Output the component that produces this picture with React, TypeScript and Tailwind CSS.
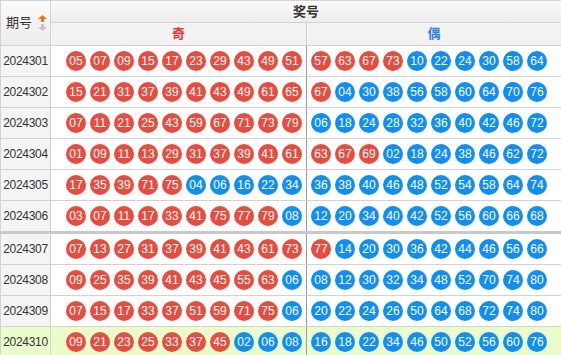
import React from 'react';

interface Draw {
  issue: string;
  odd: string[];
  even: string[];
  highlight?: boolean;
}

const draws: Draw[] = [
  { issue: '2024301', odd: ['05', '07', '09', '15', '17', '23', '29', '43', '49', '51'], even: ['57', '63', '67', '73', '10', '22', '24', '30', '58', '64'] },
  { issue: '2024302', odd: ['15', '21', '31', '37', '39', '41', '43', '49', '61', '65'], even: ['67', '04', '30', '38', '56', '58', '60', '64', '70', '76'] },
  { issue: '2024303', odd: ['07', '11', '21', '25', '43', '59', '67', '71', '73', '79'], even: ['06', '18', '24', '28', '32', '36', '40', '42', '46', '72'] },
  { issue: '2024304', odd: ['01', '09', '11', '13', '29', '31', '37', '39', '41', '61'], even: ['63', '67', '69', '02', '18', '24', '38', '46', '62', '72'] },
  { issue: '2024305', odd: ['17', '35', '39', '71', '75', '04', '06', '16', '22', '34'], even: ['36', '38', '40', '46', '48', '52', '54', '58', '64', '74'] },
  { issue: '2024306', odd: ['03', '07', '11', '17', '33', '41', '75', '77', '79', '08'], even: ['12', '20', '34', '40', '42', '52', '56', '60', '66', '68'] },
  { issue: '2024307', odd: ['07', '13', '27', '31', '37', '39', '41', '43', '61', '73'], even: ['77', '14', '20', '30', '36', '42', '44', '46', '56', '66'] },
  { issue: '2024308', odd: ['09', '25', '35', '39', '41', '43', '45', '55', '63', '06'], even: ['08', '12', '30', '32', '34', '48', '52', '70', '74', '80'] },
  { issue: '2024309', odd: ['07', '15', '17', '33', '37', '51', '59', '71', '75', '06'], even: ['20', '22', '24', '26', '50', '64', '68', '72', '74', '80'] },
  { issue: '2024310', odd: ['09', '21', '23', '25', '33', '37', '45', '02', '06', '08'], even: ['16', '18', '22', '34', '46', '50', '52', '56', '60', '76'], highlight: true },
];

const Ball: React.FC<{ num: string }> = ({ num }) => {
  const isOdd = parseInt(num, 10) % 2 === 1;
  return (
    <span
      className={`flex h-[20px] w-[20px] shrink-0 items-center justify-center rounded-full text-[12px] leading-none text-white ${
        isOdd ? 'bg-[#e84c3e]' : 'bg-[#108ef3]'
      }`}
    >
      {num}
    </span>
  );
};

const SortIcon = () => (
  <svg width="9" height="16" viewBox="0 0 9 16" className="ml-[6px]">
    <path d="M4.5 0 L9 4 L6 4 L6 7 L3 7 L3 4 L0 4 Z" fill="#f5700f" />
    <path d="M4.5 16 L9 12 L6 12 L6 9 L3 9 L3 12 L0 12 Z" fill="#c4c4c4" />
  </svg>
);

export default function App() {
  return (
    <div
      className="h-[355px] w-[561px] overflow-hidden bg-white text-[#333]"
      style={{ fontFamily: '"Liberation Sans", "Noto Sans CJK SC", sans-serif' }}
    >
      {/* header */}
      <div className="flex border-t border-[#d2d2d2]">
        <div className="flex h-[45px] w-[51px] shrink-0 items-center justify-center border-r border-b border-l border-[#d2d2d2] bg-gradient-to-b from-[#fbfbfb] to-[#ececec] pl-[2px] text-[13px]">
          期号
          <SortIcon />
        </div>
        <div className="flex flex-1 flex-col">
          <div className="flex h-[22px] items-center justify-center border-b border-[#d2d2d2] bg-gradient-to-b from-[#fbfbfb] to-[#ececec] text-[13px] font-bold text-[#333]">
            奖号
          </div>
          <div className="flex h-[23px] border-b border-[#d2d2d2] bg-[#f2f2f2] text-[13px] font-bold">
            <div className="flex w-[256px] items-center justify-center border-r border-[#cfcfcf] text-[#e4393c]">奇</div>
            <div className="flex flex-1 items-center justify-center text-[#2f7ff0]">偶</div>
          </div>
        </div>
      </div>

      {/* rows */}
      {draws.map((d, i) => (
        <div
          key={d.issue}
          className={`flex h-[31px] ${i === 5 ? 'h-[33px] border-b-[3px] border-[#c9c9c9]' : 'border-b border-[#d2d2d2]'} ${
            d.highlight ? 'bg-[#ebfccb]' : 'bg-white'
          }`}
        >
          <div
            className={`flex w-[51px] shrink-0 items-center justify-center border-r border-l border-[#d2d2d2] text-[12px] tracking-[-0.3px] ${
              d.highlight ? 'bg-[#ebfccb]' : 'bg-[#f4f4f4]'
            }`}
          >
            {d.issue}
          </div>
          <div className="flex w-[256px] items-center justify-end gap-[4px] border-r border-[#9c9c9c] pr-[4px]">
            {d.odd.map((n, k) => (
              <Ball key={k} num={n} />
            ))}
          </div>
          <div className="flex flex-1 items-center gap-[4px] pl-[4px]">
            {d.even.map((n, k) => (
              <Ball key={k} num={n} />
            ))}
          </div>
        </div>
      ))}
    </div>
  );
}
